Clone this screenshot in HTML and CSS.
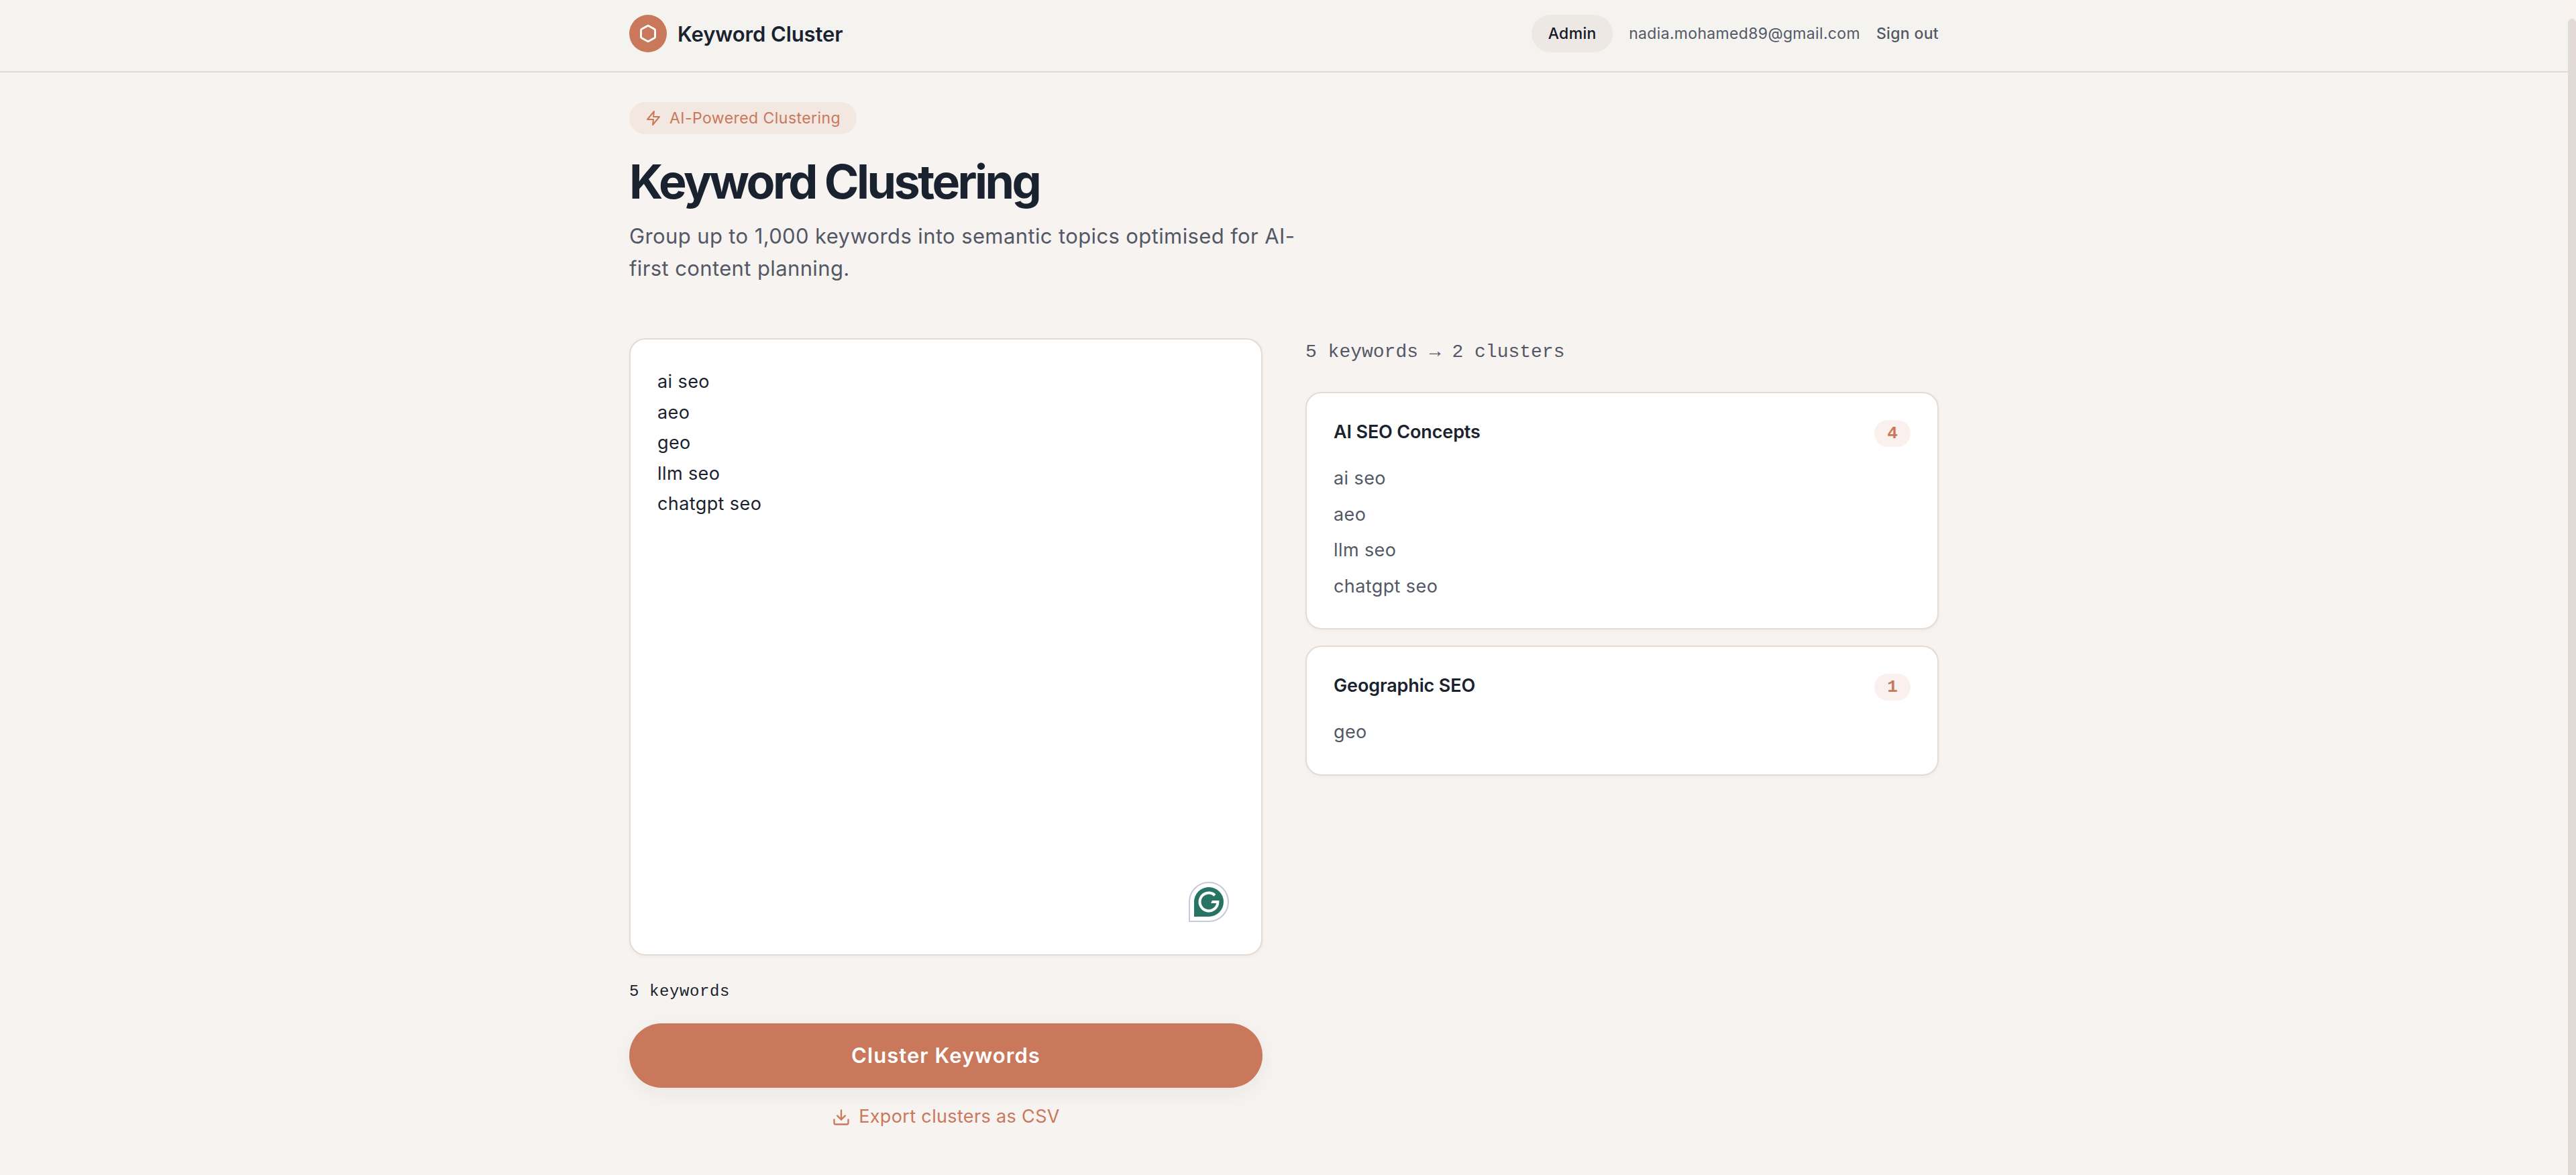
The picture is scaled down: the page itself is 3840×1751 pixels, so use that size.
FILE: index.html
```html
<!DOCTYPE html>
<html lang="en">
<head>
<meta charset="utf-8">
<title>Keyword Cluster</title>
<link rel="stylesheet" href="styles.css">
</head>
<body>
<div class="page">
  <header class="topbar">
    <div class="container topbar-inner">
      <div class="brand">
        <span class="brand-mark">
          <svg width="28" height="28" viewBox="0 0 24 24" fill="none" stroke="currentColor" stroke-width="2.5" stroke-linecap="round" stroke-linejoin="round"><path d="M21 16V8a2 2 0 0 0-1-1.73l-7-4a2 2 0 0 0-2 0l-7 4A2 2 0 0 0 3 8v8a2 2 0 0 0 1 1.73l7 4a2 2 0 0 0 2 0l7-4A2 2 0 0 0 21 16z"/></svg>
        </span>
        <span class="brand-name">Keyword Cluster</span>
      </div>
      <nav class="account">
        <a class="admin">Admin</a>
        <span class="email">nadia.mohamed89@gmail.com</span>
        <a class="signout">Sign out</a>
      </nav>
    </div>
  </header>
  <main class="container main">
    <div class="tag">
      <svg width="24" height="24" viewBox="0 0 24 24" fill="none" stroke="currentColor" stroke-width="2" stroke-linecap="round" stroke-linejoin="round"><polygon points="13 2 3 14 12 14 11 22 21 10 12 10 13 2"/></svg>
      <span>AI-Powered Clustering</span>
    </div>
    <h1 class="title">Keyword Clustering</h1>
    <p class="lead">Group up to 1,000 keywords into semantic topics optimised for AI-first content planning.</p>
    <div class="columns">
      <section class="input-col">
        <div class="editor" role="textbox" aria-multiline="true">
          <div>ai seo</div>
          <div>aeo</div>
          <div>geo</div>
          <div>llm seo</div>
          <div>chatgpt seo</div>
          <div class="assistant">
            <div class="assistant-face">
              <svg width="44" height="44" viewBox="0 0 44 44"><path d="M31 12.2A13.4 13.4 0 1 0 35.3 22" fill="none" stroke="#fff" stroke-width="4"/><path d="M26.9 20H37.4V22L36.5 24H25.2Z" fill="#fff"/></svg>
            </div>
          </div>
        </div>
        <div class="count">5 keywords</div>
        <button class="submit">Cluster Keywords</button>
        <a class="export">
          <svg width="28" height="28" viewBox="0 0 24 24" fill="none" stroke="currentColor" stroke-width="2" stroke-linecap="round" stroke-linejoin="round"><path d="M21 15v4a2 2 0 0 1-2 2H5a2 2 0 0 1-2-2v-4"/><polyline points="7 10 12 15 17 10"/><line x1="12" y1="15" x2="12" y2="3"/></svg>
          <span>Export clusters as CSV</span>
        </a>
      </section>
      <section class="result-col">
        <div class="summary">5 keywords → 2 clusters</div>
        <div class="cards">
          <article class="card">
            <div class="card-head"><h2>AI SEO Concepts</h2><span class="badge">4</span></div>
            <ul class="terms"><li>ai seo</li><li>aeo</li><li>llm seo</li><li>chatgpt seo</li></ul>
          </article>
          <article class="card">
            <div class="card-head"><h2>Geographic SEO</h2><span class="badge">1</span></div>
            <ul class="terms"><li>geo</li></ul>
          </article>
        </div>
      </section>
    </div>
  </main>
</div>
<div class="scrollbar"><div class="thumb"></div></div>
</body>
</html>
```
FILE: styles.css
```css
* { box-sizing: border-box; }

body {
  margin: 0;
  height: 1751px;
  display: flex;
  overflow: hidden;
  background: #f7f3f0;
  color: #1a2230;
  font-family: Inter, "Liberation Sans", sans-serif;
}

h1, h2, p, ul { margin: 0; padding: 0; }
svg { display: block; flex: none; }

.page { flex: 1; min-width: 0; }
.container { width: 1952px; margin: 0 auto; }

.scrollbar {
  width: 12px;
  padding-top: 28px;
  background: #f7f3ec;
  display: flex;
}
.thumb {
  flex: 1;
  background: #e2dad4;
  border-radius: 6px 6px 0 0;
}

.topbar {
  height: 108px;
  padding-top: 22px;
  background: #f5f3ef;
  border-bottom: 2px solid #e2dad4;
}
.topbar-inner {
  height: 56px;
  display: flex;
  align-items: center;
  justify-content: space-between;
}
.brand { display: flex; align-items: center; gap: 16px; }
.brand-mark {
  width: 56px;
  height: 56px;
  border-radius: 50%;
  background: #c9785c;
  color: #fff;
  display: flex;
  align-items: center;
  justify-content: center;
}
.brand-name { font-size: 31px; font-weight: 600; letter-spacing: -0.1px; }
.account {
  display: flex;
  align-items: center;
  gap: 24px;
  font-size: 23px;
  letter-spacing: 0.33px;
  color: #525866;
}
.admin {
  width: 121px;
  height: 56px;
  line-height: 56px;
  text-align: center;
  border-radius: 28px;
  background: #ede8e4;
  color: #131826;
  font-weight: 500;
}
.signout { font-weight: 500; }

.main { padding-top: 44px; }
.tag {
  width: 339px;
  height: 48px;
  padding-left: 24px;
  border-radius: 24px;
  display: flex;
  align-items: center;
  gap: 12px;
  background: #f3e7e1;
  color: #c9785c;
  font-size: 23px;
  letter-spacing: 0.45px;
}
.title {
  margin-top: 31px;
  font-size: 70px;
  line-height: 79px;
  font-weight: 700;
  letter-spacing: -3.55px;
}
.lead {
  margin-top: 18px;
  width: 1024px;
  font-size: 31px;
  line-height: 48px;
  letter-spacing: 0.38px;
  color: #525866;
}

.columns {
  margin-top: 80px;
  display: grid;
  grid-template-columns: 1fr 1fr;
  gap: 64px;
}
.input-col { display: flex; flex-direction: column; }
.editor, .card {
  background: #fff;
  border: 2px solid #e4dcd4;
  border-radius: 24px;
  padding: 40px;
  box-shadow: 0 2px 6px rgba(26, 34, 48, 0.04);
}
.editor {
  position: relative;
  height: 920px;
  font-size: 27px;
  line-height: 45.5px;
  letter-spacing: 0.4px;
}
.assistant {
  position: absolute;
  right: 48px;
  bottom: 48px;
  width: 60px;
  height: 60px;
  border: 2px solid #c6cad7;
  border-radius: 30px 30px 30px 0;
  background: #fff;
  display: flex;
  align-items: center;
  justify-content: center;
}
.assistant-face {
  width: 44px;
  height: 44px;
  border-radius: 22px 22px 22px 0;
  background: #277364;
}
.count {
  margin-top: 36px;
  font: 24px/36px "Liberation Mono", monospace;
  letter-spacing: 0.6px;
}
.submit {
  margin-top: 29px;
  height: 96px;
  padding-bottom: 3px;
  border: 0;
  border-radius: 48px;
  background: #c9785c;
  color: #fff;
  font: 600 31px Inter, sans-serif;
  letter-spacing: 1.05px;
  box-shadow: 0 8px 32px rgba(26, 34, 48, 0.06);
}
.export {
  margin-top: 22px;
  height: 44px;
  display: flex;
  align-items: center;
  justify-content: center;
  gap: 12px;
  color: #c9785c;
  font-size: 27px;
  letter-spacing: 0.35px;
}
.export span { line-height: 42px; padding-bottom: 2px; }

.summary {
  font: 28px/41px "Liberation Mono", monospace;
  color: #525866;
}
.cards {
  margin-top: 39px;
  display: flex;
  flex-direction: column;
  gap: 24px;
}
.card-head {
  display: flex;
  align-items: flex-start;
  justify-content: space-between;
}
.card-head h2 {
  font-size: 27px;
  line-height: 35px;
  font-weight: 600;
  letter-spacing: -0.15px;
}
.badge {
  width: 54px;
  height: 40px;
  padding-top: 2px;
  border-radius: 20px;
  background: #faf1ee;
  color: #c9785c;
  font: bold 26px/37px "Liberation Mono", monospace;
  text-align: center;
}
.terms {
  margin-top: 24px;
  list-style: none;
  display: flex;
  flex-direction: column;
  gap: 8px;
  font-size: 27px;
  line-height: 45.5px;
  letter-spacing: 0.4px;
  color: #525866;
}
```
